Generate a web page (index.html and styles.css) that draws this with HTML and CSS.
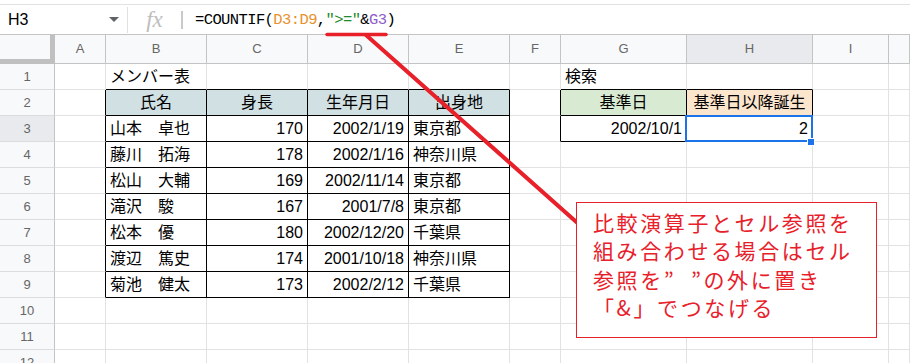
FILE: index.html
```html
<!DOCTYPE html>
<html>
<head>
    <meta charset="UTF-8">
    <title>COUNTIF</title>
    <link rel="stylesheet" href="styles.css">
</head>
<body>

<div class="formula-bar">
    <div class="name-box">
        <span>H3</span>
        <svg class="caret" width="10" height="5" viewBox="0 0 10 5"><path d="M0 0h10L5 5z" fill="#5f6368"/></svg>
    </div>
    <span class="sep-tall"></span>
    <span class="fx">fx</span>
    <span class="sep-short"></span>
    <div class="formula">=COUNTIF(<span class="ref-d">D3:D9</span>,<span class="str">"&gt;="</span>&amp;<span class="ref-g">G3</span>)</div>
</div>

<div class="sheet">
    <!-- column headers -->
    <div class="c corner"></div>
    <div class="c ch">A</div>
    <div class="c ch">B</div>
    <div class="c ch">C</div>
    <div class="c ch">D</div>
    <div class="c ch">E</div>
    <div class="c ch">F</div>
    <div class="c ch">G</div>
    <div class="c ch on">H</div>
    <div class="c ch">I</div>
    <div class="c ch"></div>

    <!-- 1 -->
    <div class="c rh">1</div>
    <div class="c"></div>
    <div class="c kb">メンバー表</div>
    <div class="c kb"></div>
    <div class="c kb"></div>
    <div class="c kb"></div>
    <div class="c"></div>
    <div class="c kb">検索</div>
    <div class="c kb"></div>
    <div class="c"></div>
    <div class="c"></div>

    <!-- 2 -->
    <div class="c rh">2</div>
    <div class="c kr"></div>
    <div class="c kr kb m blue">氏名</div>
    <div class="c kr kb m blue">身長</div>
    <div class="c kr kb m blue">生年月日</div>
    <div class="c kr kb m blue">出身地</div>
    <div class="c kr"></div>
    <div class="c kr kb m green">基準日</div>
    <div class="c kr kb m orange">基準日以降誕生</div>
    <div class="c"></div>
    <div class="c"></div>

    <!-- 3 -->
    <div class="c rh on">3</div>
    <div class="c kr"></div>
    <div class="c kr kb">山本　卓也</div>
    <div class="c kr kb r">170</div>
    <div class="c kr kb r">2002/1/19</div>
    <div class="c kr kb">東京都</div>
    <div class="c kr"></div>
    <div class="c kr kb r">2002/10/1</div>
    <div class="c kr kb r active">2<span class="sel"></span><span class="handle"></span></div>
    <div class="c"></div>
    <div class="c"></div>

    <!-- 4 -->
    <div class="c rh">4</div>
    <div class="c kr"></div>
    <div class="c kr kb">藤川　拓海</div>
    <div class="c kr kb r">178</div>
    <div class="c kr kb r">2002/1/16</div>
    <div class="c kr kb">神奈川県</div>
    <div class="c"></div>
    <div class="c"></div>
    <div class="c"></div>
    <div class="c"></div>
    <div class="c"></div>

    <!-- 5 -->
    <div class="c rh">5</div>
    <div class="c kr"></div>
    <div class="c kr kb">松山　大輔</div>
    <div class="c kr kb r">169</div>
    <div class="c kr kb r">2002/11/14</div>
    <div class="c kr kb">東京都</div>
    <div class="c"></div>
    <div class="c"></div>
    <div class="c"></div>
    <div class="c"></div>
    <div class="c"></div>

    <!-- 6 -->
    <div class="c rh">6</div>
    <div class="c kr"></div>
    <div class="c kr kb">滝沢　駿</div>
    <div class="c kr kb r">167</div>
    <div class="c kr kb r">2001/7/8</div>
    <div class="c kr kb">東京都</div>
    <div class="c"></div>
    <div class="c"></div>
    <div class="c"></div>
    <div class="c"></div>
    <div class="c"></div>

    <!-- 7 -->
    <div class="c rh">7</div>
    <div class="c kr"></div>
    <div class="c kr kb">松本　優</div>
    <div class="c kr kb r">180</div>
    <div class="c kr kb r">2002/12/20</div>
    <div class="c kr kb">千葉県</div>
    <div class="c"></div>
    <div class="c"></div>
    <div class="c"></div>
    <div class="c"></div>
    <div class="c"></div>

    <!-- 8 -->
    <div class="c rh">8</div>
    <div class="c kr"></div>
    <div class="c kr kb">渡辺　篤史</div>
    <div class="c kr kb r">174</div>
    <div class="c kr kb r">2001/10/18</div>
    <div class="c kr kb">神奈川県</div>
    <div class="c"></div>
    <div class="c"></div>
    <div class="c"></div>
    <div class="c"></div>
    <div class="c"></div>

    <!-- 9 -->
    <div class="c rh">9</div>
    <div class="c kr"></div>
    <div class="c kr kb">菊池　健太</div>
    <div class="c kr kb r">173</div>
    <div class="c kr kb r">2002/2/12</div>
    <div class="c kr kb">千葉県</div>
    <div class="c"></div>
    <div class="c"></div>
    <div class="c"></div>
    <div class="c"></div>
    <div class="c"></div>

    <!-- 10 -->
    <div class="c rh">10</div>
    <div class="c"></div>
    <div class="c"></div>
    <div class="c"></div>
    <div class="c"></div>
    <div class="c"></div>
    <div class="c"></div>
    <div class="c"></div>
    <div class="c"></div>
    <div class="c"></div>
    <div class="c"></div>

    <!-- 11 -->
    <div class="c rh">11</div>
    <div class="c"></div>
    <div class="c"></div>
    <div class="c"></div>
    <div class="c"></div>
    <div class="c"></div>
    <div class="c"></div>
    <div class="c"></div>
    <div class="c"></div>
    <div class="c"></div>
    <div class="c"></div>

    <!-- 12 -->
    <div class="c rh">12</div>
    <div class="c"></div>
    <div class="c"></div>
    <div class="c"></div>
    <div class="c"></div>
    <div class="c"></div>
    <div class="c"></div>
    <div class="c"></div>
    <div class="c"></div>
    <div class="c"></div>
    <div class="c"></div>
</div>

<!-- annotation: underline + arrow line -->
<svg class="marks" width="910" height="363" viewBox="0 0 910 363">
    <line x1="327" y1="34.5" x2="386" y2="34.5" stroke="#e8202a" stroke-width="3.5" stroke-linecap="round"/>
    <line x1="366" y1="35" x2="582" y2="227" stroke="#e8202a" stroke-width="4" stroke-linecap="round"/>
</svg>

<div class="note">
    比較演算子とセル参照を<br>
    組み合わせる場合はセル<br>
    参照を”&nbsp;&nbsp;”の外に置き<br>
    「&amp;」でつなげる
</div>

</body>
</html>
```

FILE: styles.css
```css
body{
    margin: 0;
    width: 910px;
    height: 363px;
    overflow: hidden;
    position: relative;
    background: #fff;
    font-family: "Liberation Sans", "Noto Sans CJK JP", Arial, sans-serif;
    color: #000;
}

/* formula bar */
.formula-bar{
    margin-top: 4px;
    height: 29px;
    border-top: 1px solid #e1e1e1;
    display: flex;
    align-items: center;
}
.name-box{
    width: 127px;
    box-sizing: border-box;
    padding: 0 8px 0 8px;
    display: flex;
    align-items: center;
    justify-content: space-between;
    font-size: 16px;
}
.sep-tall{
    width: 1px;
    height: 26px;
    background: #e0e0e0;
}
.fx{
    width: 53px;
    text-align: center;
    font-family: "Liberation Serif", serif;
    font-style: italic;
    font-size: 23px;
    color: #bdbdbd;
}
.sep-short{
    width: 2px;
    height: 18px;
    background: #cacaca;
}
.formula{
    margin-left: 12px;
    font-family: "Liberation Mono", monospace;
    font-size: 15.5px;
    letter-spacing: -0.6px;
}
.ref-d{ color: #e8912d; }
.str{ color: #1e8a2e; }
.ref-g{ color: #8e5cc8; }

/* grid */
.sheet{
    display: grid;
    grid-template-columns: 55px 51px 101px 101px 101px 101px 51px 126px 126px 76px 1fr;
    grid-template-rows: 29px repeat(12, 26px);
    border-top: 1px solid #c4c4c4;
}
.c{
    box-sizing: border-box;
    border-right: 1px solid #e2e2e2;
    border-bottom: 1px solid #e2e2e2;
    font-size: 16px;
    line-height: 25px;
    padding: 0 4px;
    white-space: nowrap;
}
.corner{
    background: #f8f9fa;
    border-right: 5px solid #c0c0c0;
    border-bottom: 5px solid #c0c0c0;
}
.ch{
    background: #f8f9fa;
    border-right-color: #c4c4c4;
    border-bottom: 1px solid #c4c4c4;
    text-align: center;
    font-size: 13px;
    line-height: 28px;
    color: #666;
}
.rh{
    background: #f8f9fa;
    border-right-color: #c4c4c4;
    border-bottom-color: #dcdcdc;
    text-align: center;
    font-size: 13px;
    line-height: 26px;
    color: #666;
}
.on{
    background: #e8eaed;
}

.kr{ border-right-color: #000; }
.kb{ border-bottom-color: #000; }
.r{ text-align: right; }
.m{ text-align: center; }

.blue{ background: #d0e0e3; }
.green{ background: #d9ead3; }
.orange{ background: #fce5cd; }

.active{
    position: relative;
}
.sel{
    position: absolute;
    left: -2px;
    top: -1px;
    right: -1px;
    bottom: -1px;
    border: 2px solid #1a73e8;
}
.handle{
    position: absolute;
    right: -3px;
    bottom: -5px;
    width: 6px;
    height: 6px;
    background: #1a73e8;
    border: 1px solid #fff;
}

/* annotation */
.marks{
    position: absolute;
    left: 0;
    top: 0;
    pointer-events: none;
}
.note{
    position: absolute;
    left: 576px;
    top: 202px;
    width: 301px;
    height: 136px;
    box-sizing: border-box;
    padding: 5px 0 0 16px;
    border: 1.5px solid #e8202a;
    background: #fff;
    color: #e8202a;
    font-family: "Noto Sans CJK JP", sans-serif;
    font-size: 21px;
    line-height: 28.3px;
    letter-spacing: 2.6px;
    white-space: nowrap;
}
```
